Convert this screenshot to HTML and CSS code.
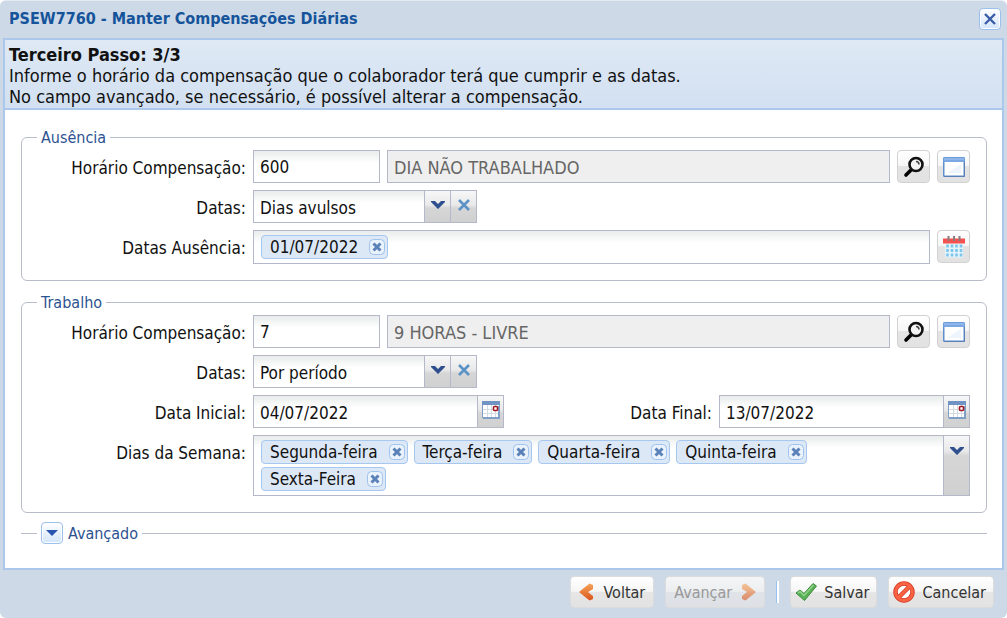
FILE: index.html
```
<!DOCTYPE html>
<html lang="pt-BR">
<head>
  <meta charset="UTF-8">
  <meta name="viewport" content="width=device-width, initial-scale=1">
  <title>PSEW7760 - Manter Compensações Diárias</title>
  <link rel="stylesheet" href="styles.css">
</head>
<body>
  <!-- Icones compartilhados -->
  <svg class="sprite" aria-hidden="true">
    <symbol id="i-lupa" viewBox="0 0 22 22">
      <path d="M3 19l6-6" stroke="#000" stroke-width="3.6" stroke-linecap="round"/>
      <circle cx="13" cy="8.500" r="6.500" fill="#f4f4f4" stroke="#111" stroke-width="2.600"/>
      <path d="M13 5.500c2 0 3 1 3 3" fill="none" stroke="#444" stroke-width="1.600"/>
    </symbol>
    <symbol id="i-janela" viewBox="0 0 22 20">
      <rect x="0" y="0" width="22" height="20" rx="1.500" fill="#5f8fce"/>
      <rect x="0.500" y="0.500" width="21" height="4.500" fill="#7ba7e3"/>
      <path d="M1 2h20" stroke="#a3c4f1"/>
      <rect x="1.500" y="5" width="19" height="13.500" fill="#fff"/>
      <path d="M4 16L18 7v9z" fill="#edf4fc"/>
      <path d="M21.500 5v14.500H1" fill="none" stroke="#5a7fb5"/>
    </symbol>
    <symbol id="i-agenda" viewBox="0 0 22 22">
      <rect x="0" y="2.500" width="22" height="5" fill="#f4514f"/>
      <path d="M5.500 0v5M11 0v5M16.500 0v5" stroke="#8a7b7d" stroke-width="2"/>
      <rect x="2" y="8" width="18" height="13.500" fill="#e6f4fb"/>
      <path d="M4.500 8.500v13M9 8.500v13M13.500 8.500v13M18 8.500v13" stroke="#7cc6ee" stroke-width="2.600" stroke-dasharray="3 1.500"/>
    </symbol>
    <symbol id="i-data" viewBox="0 0 18 18">
      <rect x="0.500" y="0.500" width="17" height="17" rx="1" fill="#fff" stroke="#7f9fc6"/>
      <path d="M0 2h18" stroke="#6f94c4" stroke-width="4"/>
      <path d="M5.500 4v13M9.500 4v13M13.500 4v13M1 8.500h16M1 12.500h16" stroke="#d5dbe3"/>
      <path d="M17 5v12H1" fill="none" stroke="#7f9fc6" stroke-width="2"/>
      <rect x="11.500" y="5.500" width="4" height="4" rx="1" fill="#fff" stroke="#a31720" stroke-width="1.600"/>
    </symbol>
    <symbol id="i-seta" viewBox="0 0 14 8">
      <path d="M0 0h4l3 3 3-3h4v1L7 8 0 1z" fill="#2f4f8e"/>
    </symbol>
    <symbol id="i-limpar" viewBox="0 0 12 12">
      <path d="M1 1l10 10M11 1L1 11" stroke="#5b93c6" stroke-width="2.600"/>
    </symbol>
    <symbol id="i-remover" viewBox="0 0 16 16">
      <rect x="0.500" y="0.500" width="15" height="15" rx="4" fill="#eaf2fc" stroke="#9fc2ee"/>
      <path d="M4.500 4.500l7 7M11.500 4.500l-7 7" stroke="#5a82b8" stroke-width="3"/>
    </symbol>
    <symbol id="i-voltar" viewBox="0 0 14 18">
      <path d="M10.500 0.500L14 2v4L9 9l5 4v3l-3.500 1.500L0 9z" fill="url(#laranja)"/>
    </symbol>
    <symbol id="i-avancar" viewBox="0 0 14 18">
      <path d="M3.500 0.500L0 2v4l5 3-5 4v3l3.500 1.500L14 9z" fill="url(#laranja)"/>
    </symbol>
    <symbol id="i-salvar" viewBox="0 0 22 18">
      <path d="M1 10l4-3 4 3.500L18 0.500l3.500 2.500L9.500 17.500z" fill="#58b155" stroke="#3f8b41"/>
      <path d="M3 10l2-1.500 4 4 9.500-10.500" fill="none" stroke="#92d48b" stroke-width="1.500"/>
    </symbol>
    <symbol id="i-cancelar" viewBox="0 0 22 22">
      <circle cx="11" cy="11" r="8.500" fill="#fff" stroke="#d93a22" stroke-width="4.500"/>
      <path d="M5 17L17 5" stroke="#d93a22" stroke-width="4.500"/>
      <circle cx="11" cy="11" r="8.500" fill="none" stroke="#fa6444" stroke-width="2.800"/>
      <path d="M5 17L17 5" stroke="#fa6444" stroke-width="2.800"/>
    </symbol>
    <defs>
      <linearGradient id="laranja" x1="0" y1="0" x2="0" y2="1">
        <stop offset="0" stop-color="#f6a55b"/>
        <stop offset="1" stop-color="#d9541c"/>
      </linearGradient>
    </defs>
  </svg>

  <form class="window" onsubmit="return false">
    <header class="window-header">
      <h1>PSEW7760 - Manter Compensações Diárias</h1>
      <button type="button" class="tool" aria-label="Fechar">
        <svg width="12" height="12" viewBox="0 0 12 12"><path d="M1 1l10 10M11 1L1 11" stroke="#3a5da8" stroke-width="2.400"/></svg>
      </button>
    </header>

    <main class="window-body">
      <div class="info">
        <strong>Terceiro Passo: 3/3</strong>
        <p>Informe o horário da compensação que o colaborador terá que cumprir e as datas.</p>
        <p>No campo avançado, se necessário, é possível alterar a compensação.</p>
      </div>

      <div class="fields">
        <fieldset>
          <legend>Ausência</legend>
          <div class="row">
            <label for="horarioAusencia">Horário Compensação:</label>
            <input type="text" id="horarioAusencia" class="box code" value="600">
            <input type="text" class="box desc" value="DIA NÃO TRABALHADO" aria-label="Descrição do horário" readonly>
            <button type="button" class="icon-btn" aria-label="Pesquisar"><svg width="22" height="22"><use href="#i-lupa"/></svg></button>
            <button type="button" class="icon-btn" aria-label="Abrir"><svg width="22" height="20"><use href="#i-janela"/></svg></button>
          </div>
          <div class="row">
            <label for="datasAusencia">Datas:</label>
            <div class="box combo">
              <select id="datasAusencia"><option>Dias avulsos</option><option>Por período</option></select>
              <span class="trigger arrow"><svg width="14" height="8"><use href="#i-seta"/></svg></span>
              <button type="button" class="trigger" aria-label="Limpar"><svg width="12" height="12"><use href="#i-limpar"/></svg></button>
            </div>
          </div>
          <div class="row">
            <label id="lblDatasAusencia">Datas Ausência:</label>
            <div class="box tags" role="group" aria-labelledby="lblDatasAusencia">
              <div class="tag-list">
                <span class="tag">01/07/2022 <button type="button" aria-label="Remover"><svg width="16" height="16"><use href="#i-remover"/></svg></button></span>
              </div>
            </div>
            <button type="button" class="icon-btn" aria-label="Calendário"><svg width="22" height="22"><use href="#i-agenda"/></svg></button>
          </div>
        </fieldset>

        <fieldset>
          <legend>Trabalho</legend>
          <div class="row">
            <label for="horarioTrabalho">Horário Compensação:</label>
            <input type="text" id="horarioTrabalho" class="box code" value="7">
            <input type="text" class="box desc" value="9 HORAS - LIVRE" aria-label="Descrição do horário" readonly>
            <button type="button" class="icon-btn" aria-label="Pesquisar"><svg width="22" height="22"><use href="#i-lupa"/></svg></button>
            <button type="button" class="icon-btn" aria-label="Abrir"><svg width="22" height="20"><use href="#i-janela"/></svg></button>
          </div>
          <div class="row">
            <label for="datasTrabalho">Datas:</label>
            <div class="box combo">
              <select id="datasTrabalho"><option>Por período</option><option>Dias avulsos</option></select>
              <span class="trigger arrow"><svg width="14" height="8"><use href="#i-seta"/></svg></span>
              <button type="button" class="trigger" aria-label="Limpar"><svg width="12" height="12"><use href="#i-limpar"/></svg></button>
            </div>
          </div>
          <div class="row">
            <label for="dataInicial">Data Inicial:</label>
            <div class="box date">
              <input type="text" id="dataInicial" value="04/07/2022">
              <button type="button" class="trigger" aria-label="Escolher data"><svg width="18" height="18"><use href="#i-data"/></svg></button>
            </div>
            <label for="dataFinal" class="second">Data Final:</label>
            <div class="box date">
              <input type="text" id="dataFinal" value="13/07/2022">
              <button type="button" class="trigger" aria-label="Escolher data"><svg width="18" height="18"><use href="#i-data"/></svg></button>
            </div>
          </div>
          <div class="row">
            <label id="lblDias">Dias da Semana:</label>
            <div class="box tags" role="group" aria-labelledby="lblDias">
              <div class="tag-list">
                <span class="tag">Segunda-feira <button type="button" aria-label="Remover"><svg width="16" height="16"><use href="#i-remover"/></svg></button></span>
                <span class="tag">Terça-feira <button type="button" aria-label="Remover"><svg width="16" height="16"><use href="#i-remover"/></svg></button></span>
                <span class="tag">Quarta-feira <button type="button" aria-label="Remover"><svg width="16" height="16"><use href="#i-remover"/></svg></button></span>
                <span class="tag">Quinta-feira <button type="button" aria-label="Remover"><svg width="16" height="16"><use href="#i-remover"/></svg></button></span>
                <span class="tag">Sexta-Feira <button type="button" aria-label="Remover"><svg width="16" height="16"><use href="#i-remover"/></svg></button></span>
              </div>
              <button type="button" class="trigger top" aria-label="Abrir lista"><svg width="14" height="8"><use href="#i-seta"/></svg></button>
            </div>
          </div>
        </fieldset>

        <fieldset class="collapsed">
          <legend>
            <button type="button" class="tool" aria-label="Expandir"><svg width="12" height="6" viewBox="0 0 12 6"><path d="M0 0h12L6 6z" fill="#2a56b0"/></svg></button>
            Avançado
          </legend>
        </fieldset>
      </div>
    </main>

    <footer class="window-footer">
      <button type="button" class="btn"><svg width="14" height="18"><use href="#i-voltar"/></svg>Voltar</button>
      <button type="button" class="btn" disabled>Avançar<svg width="14" height="18"><use href="#i-avancar"/></svg></button>
      <span class="sep"></span>
      <button type="submit" class="btn tight"><svg width="22" height="18"><use href="#i-salvar"/></svg>Salvar</button>
      <button type="button" class="btn tight"><svg width="22" height="22"><use href="#i-cancelar"/></svg>Cancelar</button>
    </footer>
  </form>
</body>
</html>
```
FILE: styles.css
```
* { box-sizing: border-box; }
body {
  margin: 0;
  background: #fff;
}
body, input, select, button {
  font-family: "DejaVu Sans Condensed", Tahoma, "DejaVu Sans", sans-serif;
  font-size: 17px;
  color: #111;
}
button {
  padding: 0;
  cursor: pointer;
}
svg { display: block; flex: none; }
.sprite { position: absolute; width: 0; height: 0; }

.window {
  display: flex;
  flex-direction: column;
  min-height: 100vh;
  padding: 0 3px;
  background: #cdd9e6;
  border-top: 1px solid #e3eaf2;
  border-radius: 6px;
}
.window-header {
  display: flex;
  align-items: center;
  justify-content: space-between;
  height: 37px;
  padding: 0 3px 2px 6px;
}
h1 {
  margin: 0;
  font-size: 16px;
  color: #15549b;
}
.tool {
  display: flex;
  align-items: center;
  justify-content: center;
  width: 22px;
  height: 22px;
  border: 1px solid #9cc0ee;
  border-radius: 4px;
  background: linear-gradient(#fff, #d3e5fb);
  box-shadow: inset 0 0 0 1px #fff;
}

.window-body {
  flex: 1;
  border: 2px solid #abc8ea;
  background: #fff;
}
.info {
  height: 70px;
  padding: 4px;
  border-bottom: 2px solid #abc8ea;
  background: linear-gradient(#dfe9f5, #d2e0f1);
  font-size: 18px;
  line-height: 21px;
}
.info strong { display: block; }
.info p { margin: 0; }

.fields { padding: 17px 15px 0 16px; }
fieldset {
  min-width: 0;
  margin: 0 0 11px;
  padding: 3px 16px 16px;
  border: 1px solid #b9bccb;
  border-radius: 6px;
}
legend {
  display: flex;
  align-items: center;
  gap: 5px;
  height: 20px;
  padding: 0 4px;
  margin-left: -1px;
  font-size: 16px;
  color: #2d5391;
}
.collapsed {
  margin-top: -3px;
  padding-bottom: 0;
  border-width: 1px 0 0;
  border-radius: 0;
}
.collapsed legend { height: 24px; margin-left: 0; }

.row {
  display: flex;
  align-items: flex-start;
  gap: 7px;
  margin-bottom: 7px;
}
.row:last-child { margin-bottom: 0; }
.row > label {
  width: 208px;
  height: 33px;
  line-height: 36px;
  text-align: right;
}
.row > .second { width: auto; margin-left: auto; }

.box {
  height: 33px;
  padding: 1px 6px 0;
  border: 1px solid #b5b8c8;
  background: linear-gradient(#e9ecec, #fff 12px);
}
.code { width: 127px; }
.desc {
  flex: 1;
  min-width: 0;
  background: #efefef;
  font-size: 18px;
  color: #666;
}
.icon-btn {
  display: flex;
  align-items: center;
  justify-content: center;
  width: 33px;
  height: 33px;
  border: 1px solid #d1d1d1;
  border-radius: 4px;
  background: linear-gradient(#fff, #f6f6f6 48%, #e4e4e4 50%, #e2e2e2);
}

.combo, .date {
  display: flex;
  padding: 0;
}
.combo { width: 224px; }
.date { width: 251px; }
.combo select, .date input {
  flex: 1;
  min-width: 0;
  padding: 2px 6px 0;
  border: 0;
  background: none;
  appearance: none;
}
.trigger {
  display: flex;
  flex: none;
  align-items: center;
  justify-content: center;
  width: 26px;
  border: 0;
  border-left: 1px solid #b5b8c8;
  background: linear-gradient(#f7f7f7, #e9e9e9 45%, #d6d6d6 55%, #d0d0d0);
}
.trigger svg { margin-bottom: 3px; }
.arrow { pointer-events: none; }
.top {
  align-items: flex-start;
  padding-top: 11px;
  background: linear-gradient(#f7f7f7, #e9e9e9 15px, #d6d6d6 20px, #d0d0d0);
}

.tags {
  display: flex;
  flex: 1;
  height: auto;
  padding: 0;
}
.tag-list {
  display: flex;
  flex: 1;
  flex-wrap: wrap;
  gap: 3px 6px;
  padding: 4px 32px 4px 7px;
}
.tag {
  display: flex;
  align-items: center;
  gap: 11px;
  height: 24px;
  padding: 0 2px 0 8px;
  border: 1px solid #a5c7f0;
  border-radius: 4px;
  background: #dde8f6;
}
.tag button {
  border: 0;
  background: none;
}

.window-footer {
  display: flex;
  align-items: flex-start;
  justify-content: flex-end;
  gap: 11px;
  height: 48px;
  padding: 6px 10px 0;
}
.btn {
  display: flex;
  align-items: center;
  gap: 10px;
  height: 32px;
  padding: 0 8px;
  border: 1px solid #dcdcdc;
  border-radius: 4px;
  background: linear-gradient(#fff, #f6f6f6 48%, #e6e6e6 50%, #e2e2e2);
  font-size: 16px;
  color: #333;
}
.tight { gap: 7px; padding: 0 7px 0 4px; }
.btn:disabled {
  background: linear-gradient(#f3f5f7, #eceef0 48%, #e0e3e7 50%, #dde1e5);
  color: #999;
}
.btn:disabled svg { opacity: .6; }
.sep {
  width: 3px;
  height: 22px;
  margin-top: 5px;
  border-left: 1px solid #98c0f4;
  border-right: 2px solid #fff;
}
```
